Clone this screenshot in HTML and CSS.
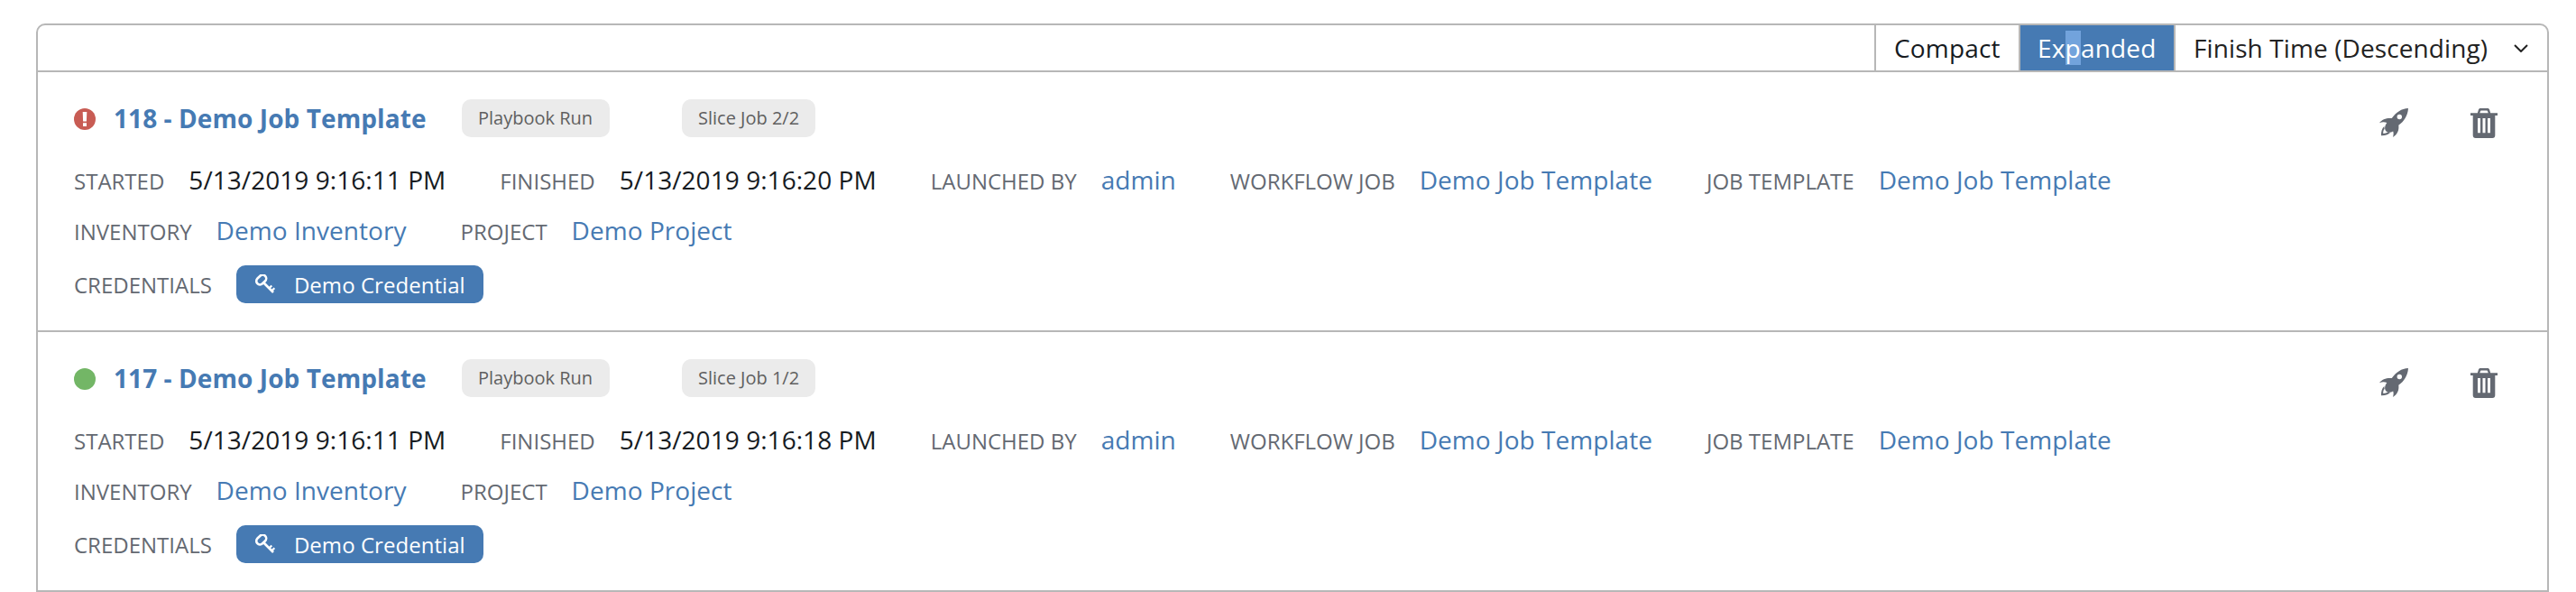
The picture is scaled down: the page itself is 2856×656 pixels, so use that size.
FILE: index.html
```html
<!DOCTYPE html>
<html lang="en">
<head>
  <meta charset="UTF-8" />
  <meta name="viewport" content="width=device-width, initial-scale=1.0"/>
  <title>Jobs</title>
  <link rel="stylesheet" href="styles.css">
</head>
<body>

  <!-- Shared icons -->
  <svg class="sprite">
    <symbol id="icon-rocket" viewBox="0 0 32 32">
      <path fill-rule="evenodd" d="M32 0C24.500 .2 18.500 4.500 13.800 11C8 10.500 3 12 0 16.300C3 15.100 5.500 15 8.300 16C5.800 19.500 5.500 22.500 7 25C9 27 12 27.500 15.200 25.500C15.900 27.500 15.700 29.500 15 32C20 28.800 22 24.500 21.300 18.700C27.500 14.500 31.500 8 32 0ZM22.300 6.800A2.700 2.700 0 1 1 22.300 12.200A2.700 2.700 0 1 1 22.300 6.800Z"/>
      <path fill-rule="evenodd" d="M5.300 20C2.800 22.500 1.800 26 2 30.200C6 30.400 9.300 29.500 12 27L9.500 26.300C8 27.300 6.500 27.800 4.300 27.900C4.100 25.700 4.500 24.200 5.700 22.700Z"/>
    </symbol>
    <symbol id="icon-trash" viewBox="0 0 30 33">
      <path fill-rule="evenodd" d="M0 5.300H7.800L8.800 2C9.200 .6 10 0 11.300 0H18.700C20 0 20.800 .6 21.200 2L22.200 5.300H30V8H27.300V30C27.300 32 26.300 33 24.300 33H5.700C3.700 33 2.700 32 2.700 30V8H0ZM10.300 5.300H19.700L19 3.200Q18.800 2.600 18.200 2.600H11.800Q11.200 2.600 11 3.200ZM8 11V27.300H11V11ZM13.500 11V27.300H16.500V11ZM19 11V27.300H22V11Z"/>
    </symbol>
    <symbol id="icon-key" viewBox="0 0 24 22">
      <g fill="none" stroke="currentColor" stroke-width="2.600">
        <rect x="1.700" y="2" width="12" height="8" rx="4" transform="rotate(-43 7.700 6)"/>
        <path d="M10.500 9.500L21 20"/>
        <path stroke-width="2.200" d="M16.500 15.300L19.300 12.500M19.500 18L22.300 15.300"/>
      </g>
    </symbol>
  </svg>

  <div class="list">
    <div class="toolbar">
      <div class="toolbar-item">Compact</div>
      <div class="toolbar-item active">Ex<span class="selected">p</span>anded</div>
      <div class="toolbar-item sort">
        Finish Time (Descending)
        <svg class="chevron" viewBox="0 0 16 9"><path d="M1 1L8 8L15 1"/></svg>
      </div>
    </div>

    <div class="row">
      <div class="row-header">
        <svg class="status failed" viewBox="0 0 24 24">
          <circle cx="12" cy="12" r="12"/>
          <path d="M9.700 4H14.300L13.900 14.500H10.100ZM10 16.300H14V20H10Z"/>
        </svg>
        <a class="name">118 - Demo Job Template</a>
        <span class="tag">Playbook Run</span>
        <span class="tag slice">Slice Job 2/2</span>
        <div class="actions">
          <svg class="rocket"><use href="#icon-rocket"/></svg>
          <svg class="trash"><use href="#icon-trash"/></svg>
        </div>
      </div>
      <div class="details">
        <div class="field"><label>STARTED</label><span>5/13/2019 9:16:11 PM</span></div>
        <div class="field"><label>FINISHED</label><span>5/13/2019 9:16:20 PM</span></div>
        <div class="field"><label>LAUNCHED BY</label><a>admin</a></div>
        <div class="field"><label>WORKFLOW JOB</label><a>Demo Job Template</a></div>
        <div class="field"><label>JOB TEMPLATE</label><a>Demo Job Template</a></div>
      </div>
      <div class="details">
        <div class="field"><label>INVENTORY</label><a>Demo Inventory</a></div>
        <div class="field"><label>PROJECT</label><a>Demo Project</a></div>
      </div>
      <div class="credentials">
        <label>CREDENTIALS</label>
        <div class="credential"><svg class="key"><use href="#icon-key"/></svg>Demo Credential</div>
      </div>
    </div>

    <div class="row">
      <div class="row-header">
        <svg class="status successful" viewBox="0 0 24 24"><circle cx="12" cy="12" r="12"/></svg>
        <a class="name">117 - Demo Job Template</a>
        <span class="tag">Playbook Run</span>
        <span class="tag slice">Slice Job 1/2</span>
        <div class="actions">
          <svg class="rocket"><use href="#icon-rocket"/></svg>
          <svg class="trash"><use href="#icon-trash"/></svg>
        </div>
      </div>
      <div class="details">
        <div class="field"><label>STARTED</label><span>5/13/2019 9:16:11 PM</span></div>
        <div class="field"><label>FINISHED</label><span>5/13/2019 9:16:18 PM</span></div>
        <div class="field"><label>LAUNCHED BY</label><a>admin</a></div>
        <div class="field"><label>WORKFLOW JOB</label><a>Demo Job Template</a></div>
        <div class="field"><label>JOB TEMPLATE</label><a>Demo Job Template</a></div>
      </div>
      <div class="details">
        <div class="field"><label>INVENTORY</label><a>Demo Inventory</a></div>
        <div class="field"><label>PROJECT</label><a>Demo Project</a></div>
      </div>
      <div class="credentials">
        <label>CREDENTIALS</label>
        <div class="credential"><svg class="key"><use href="#icon-key"/></svg>Demo Credential</div>
      </div>
    </div>
  </div>

</body>
</html>
```

FILE: styles.css
```css
:root {
  --blue: #467ab3;
  --border: #b7b7b7;
  --text: #161b1f;
  --muted: #646972;
}

* {
  margin: 0;
  padding: 0;
  box-sizing: border-box;
}

body {
  background: #fff;
  color: var(--text);
  font-family: 'Open Sans', sans-serif;
  font-size: 28px;
  padding: 26px 30px 0 40px;
  white-space: nowrap;
}

.sprite {
  display: none;
}

.list {
  border: 2px solid var(--border);
  border-radius: 10px 10px 0 0;
  height: 630px;
}

.toolbar {
  display: flex;
  justify-content: flex-end;
  height: 52px;
  border-bottom: 2px solid var(--border);
}

.toolbar-item {
  display: flex;
  align-items: center;
  padding: 0 20px;
  width: 160px;
  border-left: 2px solid var(--border);
  letter-spacing: 0.18px;
}

.toolbar-item.active {
  width: 172px;
  padding: 0 19px;
  background: var(--blue);
  background-clip: padding-box;
  color: #fff;
}

.selected {
  background: #72a3dc;
}

.toolbar-item.sort {
  justify-content: space-between;
  width: 414px;
  padding: 0 21px 0 20px;
  color: #222;
  letter-spacing: 0.1px;
}

.chevron {
  width: 16px;
  height: 9px;
  fill: none;
  stroke: #222;
  stroke-width: 2;
}

.row {
  height: 288px;
  padding: 30px 40px;
  border-bottom: 2px solid var(--border);
}

.row:last-child {
  height: 286px;
  border-bottom: none;
}

.row-header {
  display: flex;
  align-items: center;
  height: 42px;
  margin-bottom: 19px;
}

.status {
  width: 24px;
  height: 24px;
  margin-top: 2px;
  margin-right: 20px;
}

.status path {
  fill: #fff;
}

.status.failed circle {
  fill: #c85c54;
}

.status.successful circle {
  fill: #73b666;
}

.name {
  width: 386px;
  color: var(--blue);
  font-weight: bold;
  letter-spacing: 0.08px;
}

.tag {
  height: 42px;
  line-height: 41px;
  padding: 0 18px;
  width: 164px;
  border-radius: 10px;
  background: #ebebeb;
  color: #5f5f5f;
  font-size: 20px;
}

.tag.slice {
  width: 148px;
  margin-left: 80px;
}

.actions {
  display: flex;
  gap: 69px;
  margin-left: auto;
  margin-right: 15px;
  margin-top: 11px;
  fill: var(--muted);
}

.rocket {
  width: 32px;
  height: 32px;
}

.trash {
  width: 30px;
  height: 33px;
}

.details {
  display: flex;
  gap: 60px;
  height: 56px;
  line-height: 56px;
}

.field {
  display: flex;
  align-items: baseline;
  gap: 27px;
}

.field span,
.field a {
  letter-spacing: 0.05px;
}

label {
  color: var(--muted);
  font-size: 24px;
}

a {
  color: var(--blue);
}

.credentials {
  display: flex;
  align-items: center;
  gap: 27px;
  margin-top: 11px;
}

.credential {
  display: flex;
  align-items: center;
  width: 274px;
  height: 42px;
  padding-left: 20px;
  border-radius: 10px;
  background: var(--blue);
  color: #fff;
  font-size: 24px;
  letter-spacing: 0.05px;
}

.key {
  width: 24px;
  height: 22px;
  margin-right: 20px;
}
```
